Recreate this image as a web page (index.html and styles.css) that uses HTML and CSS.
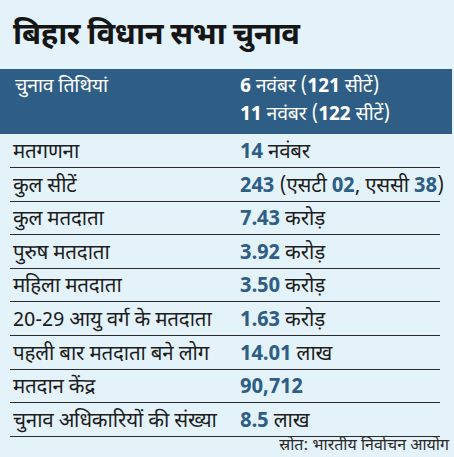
FILE: index.html
```html
<!DOCTYPE html>
<html lang="hi">

<head>
    <meta charset="utf-8"/>
    <title>बिहार विधान सभा चुनाव</title>
    <link rel="stylesheet" href="styles.css">
</head>

<body>
<div class="card">
    <h1 class="title">बिहार विधान सभा चुनाव</h1>

    <div class="band">
        <div class="label">चुनाव तिथियां</div>
        <div class="value">
            <div><b>6</b> नवंबर (<b>121</b> सीटें)</div>
            <div><b>11</b> नवंबर (<b>122</b> सीटें)</div>
        </div>
    </div>

    <div class="rows">
        <div class="row">
            <div class="label">मतगणना</div>
            <div class="value"><b>14</b> नवंबर</div>
        </div>
        <div class="row">
            <div class="label">कुल सीटें</div>
            <div class="value"><b>243</b> (एसटी <b>02</b>, एससी <b>38</b>)</div>
        </div>
        <div class="row">
            <div class="label">कुल मतदाता</div>
            <div class="value"><b>7.43</b> करोड़</div>
        </div>
        <div class="row">
            <div class="label">पुरुष मतदाता</div>
            <div class="value"><b>3.92</b> करोड़</div>
        </div>
        <div class="row">
            <div class="label">महिला मतदाता</div>
            <div class="value"><b>3.50</b> करोड़</div>
        </div>
        <div class="row">
            <div class="label">20-29 आयु वर्ग के मतदाता</div>
            <div class="value"><b>1.63</b> करोड़</div>
        </div>
        <div class="row">
            <div class="label">पहली बार मतदाता बने लोग</div>
            <div class="value"><b>14.01</b> लाख</div>
        </div>
        <div class="row">
            <div class="label">मतदान केंद्र</div>
            <div class="value"><b>90,712</b></div>
        </div>
        <div class="row">
            <div class="label">चुनाव अधिकारियों की संख्या</div>
            <div class="value"><b>8.5</b> लाख</div>
        </div>
    </div>

    <div class="source">स्रोत: भारतीय निर्वाचन आयोग</div>
</div>
</body>
</html>
```

FILE: styles.css
```css
* {
    padding: 0;
    margin: 0;
}

body {
    background-color: #e4f3f9;
    font-family: "Noto Sans Devanagari", "Noto Sans", sans-serif;
    color: #1d1d1d;
    overflow: hidden;
}

.card {
    width: 452px;
    height: 457px;
}

.title {
    padding: 17px 0 0 13px;
    height: 52px;
    box-sizing: border-box;
    font-size: 31px;
    line-height: 40px;
    letter-spacing: -0.6px;
    font-weight: 700;
    color: #161616;
}

.band {
    display: grid;
    grid-template-columns: 240px 1fr;
    height: 65px;
    margin-top: 17px;
    padding-top: 5px;
    box-sizing: border-box;
    background-color: #2e5e86;
    color: #ffffff;
    font-size: 19.5px;
    line-height: 28px;
    letter-spacing: -0.2px;
}

.band .label {
    padding-left: 15px;
}

.band b {
    font-weight: 700;
}

.rows {
    margin: 0 12px 0 10px;
}

.row {
    display: grid;
    grid-template-columns: 230px 1fr;
    height: 33.6px;
    border-bottom: 1px solid #2a2a2a;
    box-sizing: border-box;
    align-items: end;
    padding-bottom: 0;
    font-size: 20.5px;
    line-height: 28px;
    letter-spacing: -0.2px;
    white-space: nowrap;
}

.row:first-child {
    height: 34px;
}

.row .label {
    padding-left: 3px;
}

.row b {
    font-weight: 700;
    color: #2e5e86;
}

.source {
    text-align: right;
    padding: 0 3px 0 0;
    font-size: 16px;
    line-height: 19px;
    color: #2a2a2a;
}
```
